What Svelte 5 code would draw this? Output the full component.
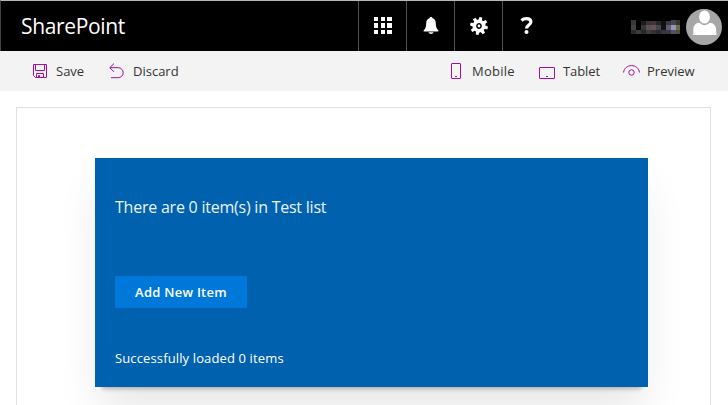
<script>
  const pixels = [
    ['#383838', '#000000', '#1c1a1d', '#3a3438', '#403639', '#252526', '#101014', '#3c3944', '#45434d', '#343428'],
    ['#424344', '#000000', '#383636', '#5c5052', '#625457', '#464547', '#111116', '#615d70', '#9494bd', '#6b6a50', '#46423e'],
    ['#29292e', '#3d3b38', '#25292d', '#403b43', '#363031', '#29292b', '#37363a', '#343943', '#51536a', '#514d37', '#494343']
  ];
  const teeth = [0, 45, 90, 135, 180, 225, 270, 315];
</script>

<div class="page">
  <header>
    <div class="brand">SharePoint</div>
    <nav>
      <button aria-label="Apps">
        <svg width="18" height="18" viewBox="0 0 18 18" fill="#fff" shape-rendering="crispEdges">
          <path d="M0 0h4v4H0zM7 0h4v4H7zM13 0h5v4h-5zM0 6h4v5H0zM7 6h4v5H7zM13 6h5v5h-5zM0 13h4v4H0zM7 13h4v4H7zM13 13h5v4h-5z" />
        </svg>
      </button>
      <button aria-label="Notifications">
        <svg width="16" height="18" viewBox="0 0 16 18" fill="#fff">
          <path d="M8 0C9 0 9.5.6 9.6 1.3 12 2 12.8 4 12.8 6.5c0 3.7.8 5 2.5 6.7V14.5H.7v-1.3C2.4 11.500 3.200 10.200 3.200 6.500 3.200 4 4 2 6.400 1.300 6.500.6 7 0 8 0zM5.500 15.300h5C10.300 16.500 9.200 17 8 17s-2.300-.5-2.500-1.700z" />
        </svg>
      </button>
      <button aria-label="Settings">
        <svg width="18" height="18" viewBox="-9 -9 18 18">
          <g fill="#fff">
            {#each teeth as a}
              <path d="M-1.900-5h3.800L1.400-8.900h-2.800z" transform="rotate({a + 12})" />
            {/each}
          </g>
          <circle r="4.700" fill="none" stroke="#fff" stroke-width="3.600" />
          <circle r="1.400" fill="#fff" />
        </svg>
      </button>
      <button aria-label="Help">
        <svg width="14" height="18" viewBox="0 0 14 18">
          <path d="M1.500 3.500C2.900 2.200 4.500 1.700 6.400 1.700c2.900 0 4.500 1.200 4.500 3.300 0 3-4.400 3.100-4.400 6.500" fill="none" stroke="#fff" stroke-width="3.200" />
          <circle cx="6.500" cy="15.100" r="2" fill="#fff" />
        </svg>
      </button>
    </nav>
    <div class="user">
      <svg class="name" width="49" height="14" viewBox="0 0 49 14" shape-rendering="crispEdges">
        {#each pixels as row, y}
          {#each row as c, x}
            <rect x={x * 5} y={y * 5} width="5" height="5" fill={c} />
          {/each}
        {/each}
        <rect x="5" width="5" height="10" />
        <rect x="10" width="30" height="1" />
      </svg>
      <svg width="36" height="36" viewBox="0 0 36 36">
        <circle cx="18" cy="18" r="18" fill="#a6a6a6" />
        <path d="M7.300 26v-5c0-4.500 2.200-7.200 6.500-7.200h9.400c4.300 0 6.800 2.700 7 7.200l.3 5z" fill="#fff" />
        <ellipse cx="18.500" cy="8" rx="6.200" ry="7.400" fill="#fff" stroke="#a6a6a6" stroke-width="1.600" />
      </svg>
    </div>
  </header>

  <div class="toolbar">
    <button class="save">
      <svg width="15" height="15" viewBox="0 0 15 15"><path d="M.5.5h13v13H2.500l-2-2zM2.500.5v6h9v-6M3.500 13.500v-4h7v4M5.500 13.500v-2h1v2" /></svg>
      <span>Save</span>
    </button>
    <button class="discard">
      <svg width="15" height="16" viewBox="0 0 15 16"><path d="M5 .5.8 4.700 5 8.900M1 4.700h8.200a4.900 4.900 0 0 1 0 10H2" /></svg>
      <span>Discard</span>
    </button>
    <button class="mobile">
      <svg width="11" height="17" viewBox="0 0 11 17"><rect x="1.500" y=".5" width="9" height="15" rx=".5" /><path d="M5 13.500h2" /></svg>
      <span>Mobile</span>
    </button>
    <button class="tablet">
      <svg width="17" height="13" viewBox="0 0 17 13"><rect x=".5" y=".5" width="15" height="11" rx=".5" /><path d="M7 9.500h2" /></svg>
      <span>Tablet</span>
    </button>
    <button class="preview">
      <svg width="17" height="12" viewBox="0 0 17 12"><path d="M.5 7.500C1.200 3 4.500.6 8.500.6s7.300 2.400 8 6.900" /><circle cx="8.500" cy="7.500" r="2.700" /></svg>
      <span>Preview</span>
    </button>
  </div>

  <main>
    <section class="card">
      <p class="title"><span>There are 0 item(s) in Test list</span></p>
      <button class="add"><span>Add New Item</span></button>
      <p class="status"><span>Successfully loaded 0 items</span></p>
    </section>
  </main>
</div>

<style>
  :global(body) { overflow: hidden; background: #fff; }
  .page {
    width: 728px; height: 405px; box-sizing: border-box; overflow: hidden;
    display: flex; flex-direction: column;
    font-family: "Open Sans", "Noto Sans", sans-serif;
  }
  button { border: 0; padding: 0; margin: 0; background: none; font: inherit; color: inherit; display: flex; align-items: center; }
  svg { display: block; flex: none; }
  header {
    height: 51px; flex: none; box-sizing: border-box; display: flex;
    background: #000; color: #fff; border-top: 1px solid #b5b8b8; border-left: 1px solid #444;
  }
  .brand { width: 357px; padding-left: 20px; box-sizing: border-box; font-size: 21px; line-height: 50px; letter-spacing: -.35px; white-space: nowrap; }
  nav { display: flex; }
  nav button { width: 48px; height: 50px; border-left: 1px solid #505050; box-sizing: border-box; justify-content: center; }
  .user { margin-left: auto; display: flex; align-items: center; gap: 6px; padding-right: 6px; }
  .name { margin-top: 1px; }
  .user svg:last-child { margin-top: 2px; }

  .toolbar {
    height: 40px; flex: none; background: #f3f3f3; color: #333; display: flex; align-items: center;
    padding: 0 33px; font-size: 13px; white-space: nowrap;
  }
  .toolbar svg { fill: none; stroke: #a4109c; stroke-width: 1; }
  .toolbar span { line-height: 40px; }
  .save { width: 76px; gap: 8px; }
  .discard { gap: 9px; }
  .mobile { margin-left: auto; width: 89px; gap: 11px; letter-spacing: .25px; }
  .tablet { width: 84px; gap: 7px; letter-spacing: -.1px; }
  .tablet svg { margin-top: 4px; }
  .preview { width: 72px; gap: 7px; }

  main {
    width: 695px; margin: 16px 0 0 16px; box-sizing: border-box; flex: 1;
    border: 1px solid #e1e1e1; border-bottom: 0; padding: 50px 62px 0 78px; overflow: hidden;
  }
  .card {
    height: 229px; box-sizing: border-box; padding: 34px 20px 0; background: #0062af; color: #fff;
    display: flex; flex-direction: column; align-items: flex-start;
    box-shadow: 0 9px 4px -7px rgba(0, 0, 0, .25), 0 25px 40px -5px rgba(0, 0, 0, .1);
  }
  p { margin: 0; white-space: nowrap; }
  .title { font-size: 16px; line-height: 30px; letter-spacing: -.23px; color: #eaf3fb; }
  .add { width: 132px; height: 32px; margin-top: 54px; justify-content: center; background: #0078d9; font-size: 13px; font-weight: 600; letter-spacing: .25px; white-space: nowrap; }
  .status { margin-top: 40px; font-size: 13px; line-height: 20px; letter-spacing: .13px; }
</style>
